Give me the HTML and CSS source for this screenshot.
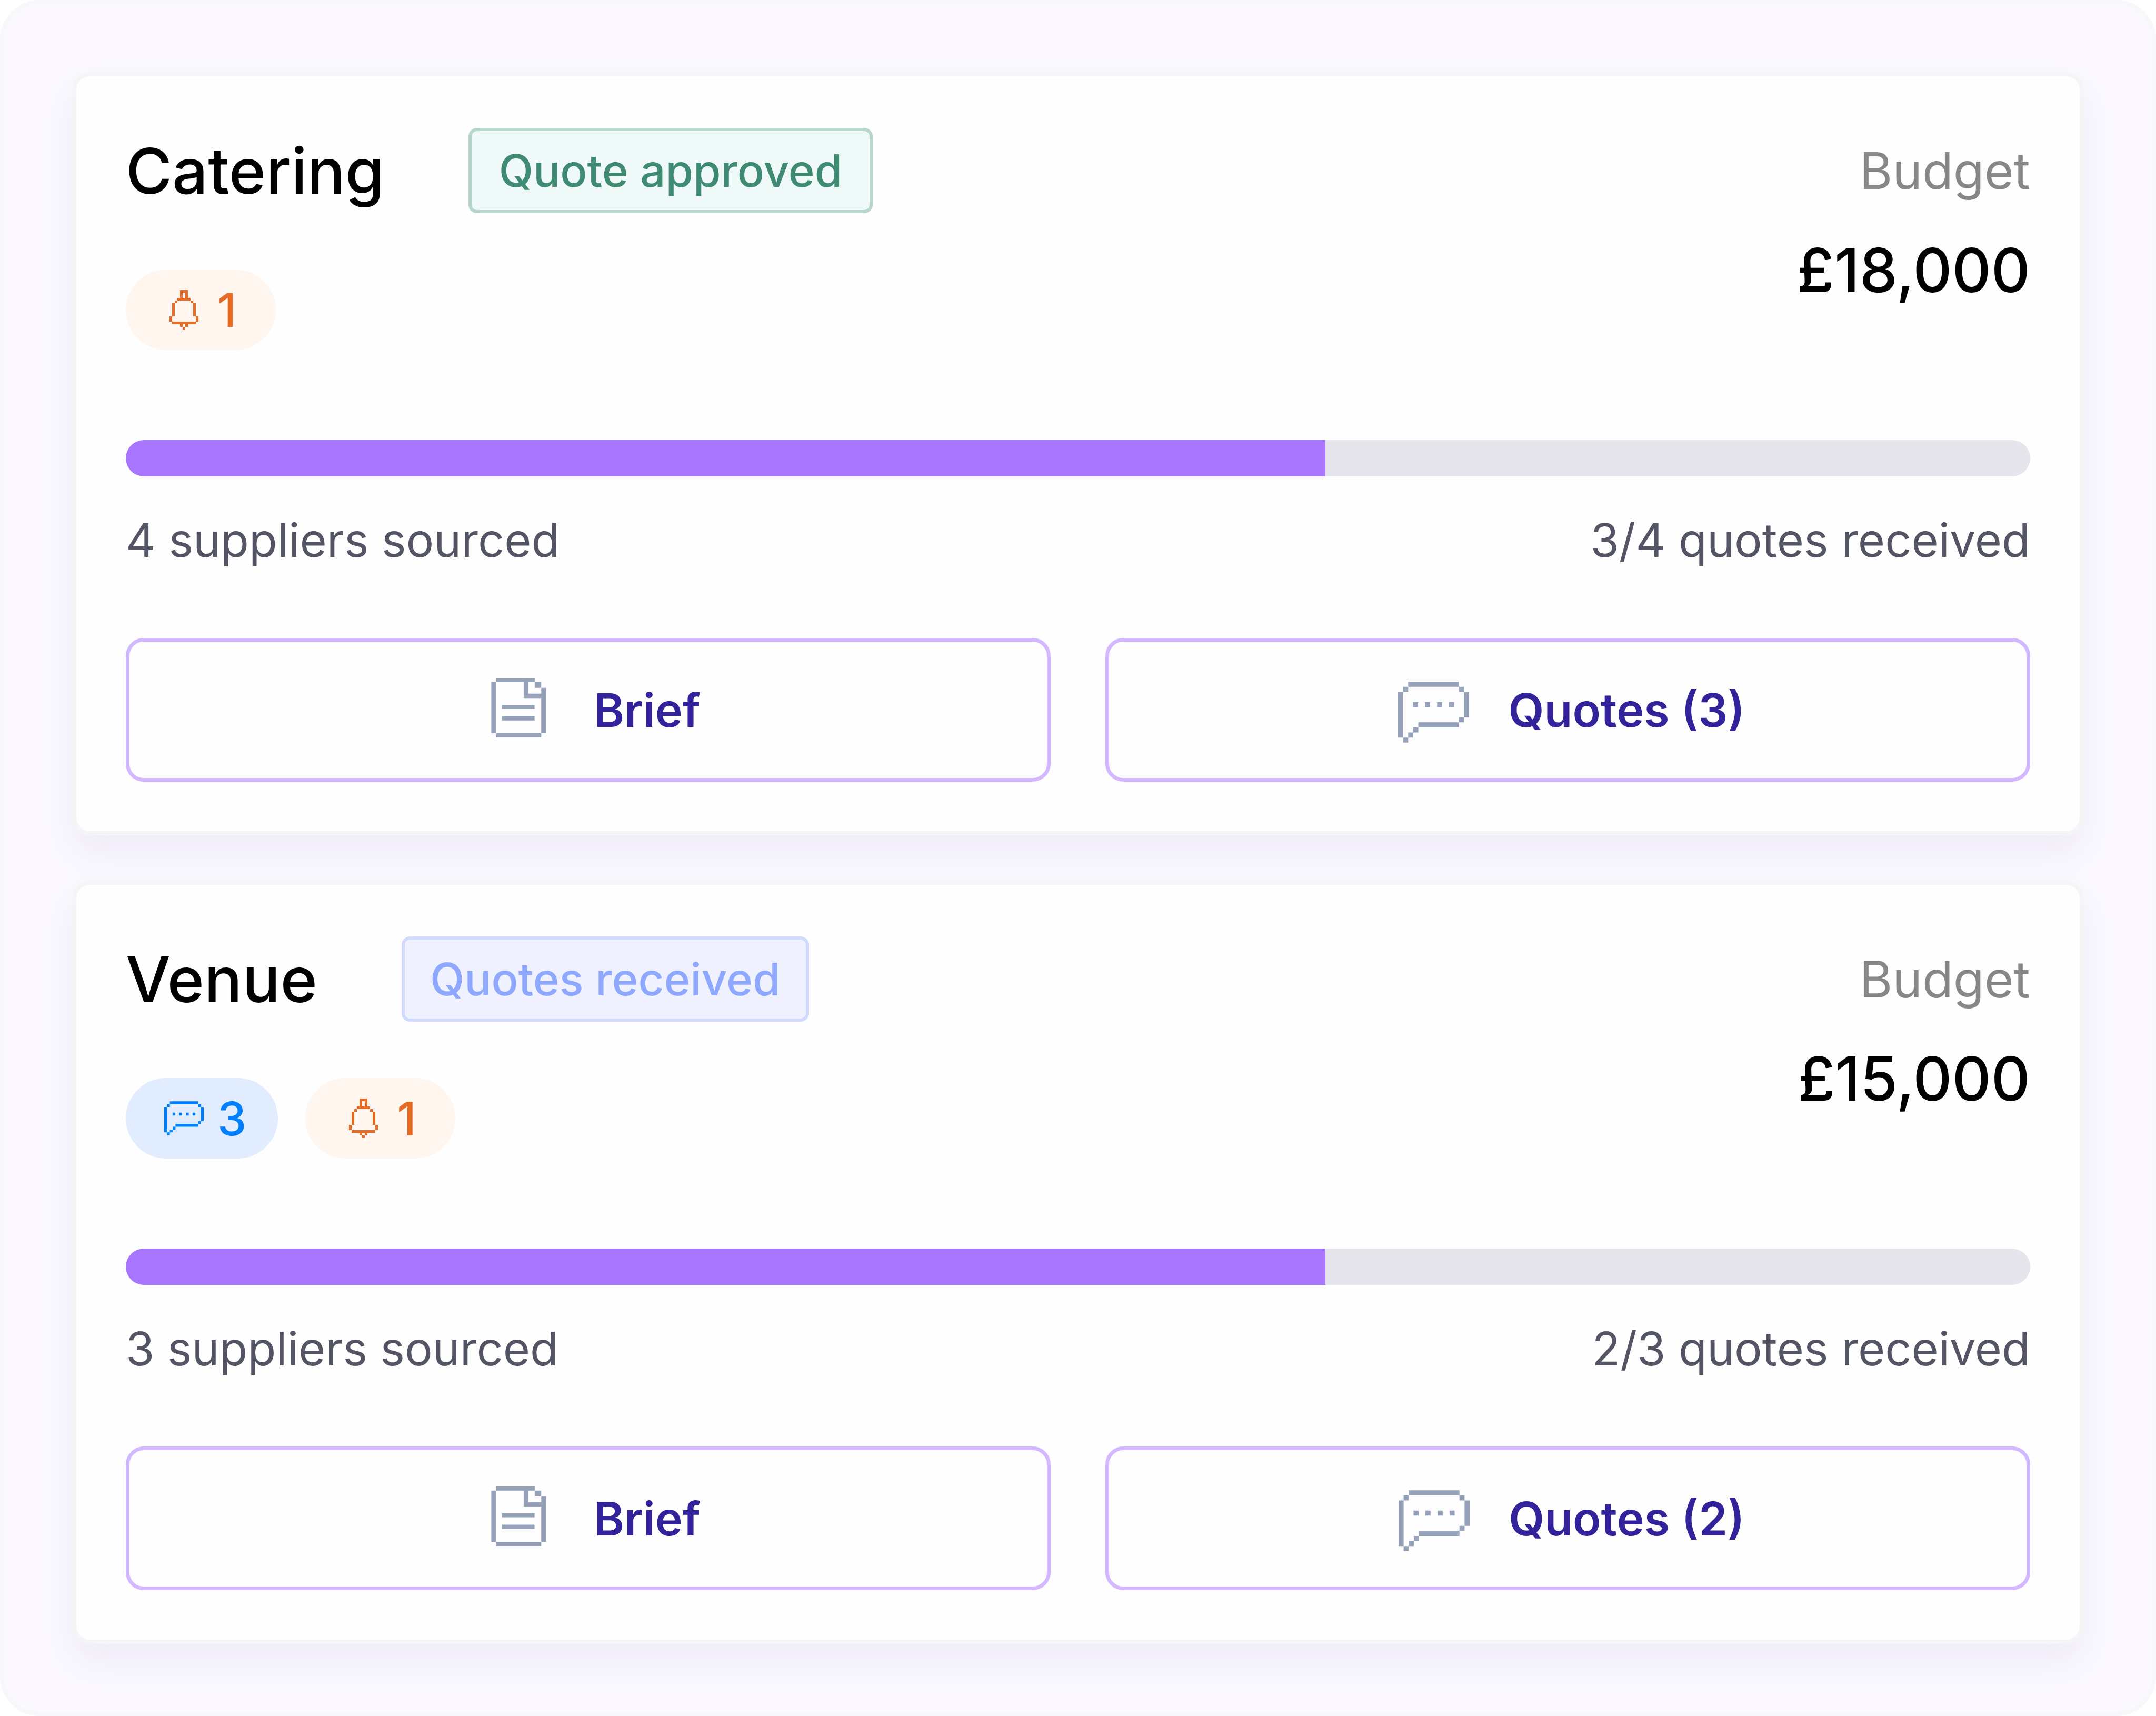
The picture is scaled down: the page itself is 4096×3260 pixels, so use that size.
FILE: index.html
```html
<!DOCTYPE html>
<html lang="en">
<head>
    <meta charset="UTF-8">
    <meta name="viewport" content="width=device-width, initial-scale=1.0">
    <title>Event Suppliers</title>
    <link rel="stylesheet" href="styles.css">
</head>
<body>

    <!-- Shared icons -->
    <svg class="icon-defs" aria-hidden="true">
        <symbol id="bell" viewBox="0 0 15 15">
            <path d="M6 0h3v1H6z M6 1h1v2H6z M8 1h1v2H8z M5 3h5v1H5z M4 4h1v1H4z M10 4h1v1h-1z M3 5h1v5H3z M11 5h1v5h-1z M2 10h1v2H2z M12 10h1v2h-1z M3 12h9v1H3z M6 13h1v1H6z M8 13h1v1H8z M7 14h1v1H7z"/>
        </symbol>
        <symbol id="chat" viewBox="0 0 14 12">
            <path d="M2 0h10v1H2z M1 1h1v1H1z M12 1h1v1h-1z M0 2h1v9H0z M13 2h1v5h-1z M12 7h1v1h-1z M4 8h8v1H4z M3 9h1v1H3z M2 10h1v1H2z M1 11h1v1H1z M2.95 4h1v1h-1z M5.3 4h1v1h-1z M7.7 4h1v1h-1z M10.05 4h1v1h-1z"/>
        </symbol>
        <symbol id="doc" viewBox="0 0 368 399">
            <path d="M32 0h259v27H32z M0 27h32v344H0z M217 27h31v108h-31z M248 105h87v30h-87z M291 27h44v39h-44z M335 66h33v305h-33z M32 371h303v28H32z M71 180h219v27H71z M71 256h219v29H71z"/>
        </symbol>
    </svg>

    <main class="panel">

        <!-- Catering -->
        <section class="card">
            <div class="card-header">
                <div class="card-info">
                    <div class="title-row">
                        <h2 class="title">Catering</h2>
                        <span class="badge approved">Quote approved</span>
                    </div>
                    <div class="pills">
                        <span class="pill alerts"><svg class="pill-icon"><use href="#bell"/></svg>1</span>
                    </div>
                </div>
                <div class="budget">
                    <div class="budget-label">Budget</div>
                    <div class="budget-value">£18,000</div>
                </div>
            </div>

            <div class="progress" role="progressbar" aria-valuenow="63" aria-valuemin="0" aria-valuemax="100" aria-label="Quotes received">
                <div class="progress-fill" style="width: 63%"></div>
            </div>
            <div class="stats">
                <span>4 suppliers sourced</span>
                <span>3/4 quotes received</span>
            </div>

            <div class="buttons">
                <button class="button" type="button">
                    <span class="button-icon"><svg class="doc-icon"><use href="#doc"/></svg></span>Brief
                </button>
                <button class="button" type="button">
                    <span class="button-icon"><svg class="chat-icon"><use href="#chat"/></svg></span>Quotes (3)
                </button>
            </div>
        </section>

        <!-- Venue -->
        <section class="card">
            <div class="card-header">
                <div class="card-info">
                    <div class="title-row">
                        <h2 class="title">Venue</h2>
                        <span class="badge received">Quotes received</span>
                    </div>
                    <div class="pills">
                        <span class="pill messages"><svg class="pill-icon"><use href="#chat"/></svg>3</span>
                        <span class="pill alerts"><svg class="pill-icon"><use href="#bell"/></svg>1</span>
                    </div>
                </div>
                <div class="budget">
                    <div class="budget-label">Budget</div>
                    <div class="budget-value">£15,000</div>
                </div>
            </div>

            <div class="progress" role="progressbar" aria-valuenow="63" aria-valuemin="0" aria-valuemax="100" aria-label="Quotes received">
                <div class="progress-fill" style="width: 63%"></div>
            </div>
            <div class="stats">
                <span>3 suppliers sourced</span>
                <span>2/3 quotes received</span>
            </div>

            <div class="buttons">
                <button class="button" type="button">
                    <span class="button-icon"><svg class="doc-icon"><use href="#doc"/></svg></span>Brief
                </button>
                <button class="button" type="button">
                    <span class="button-icon"><svg class="chat-icon"><use href="#chat"/></svg></span>Quotes (2)
                </button>
            </div>
        </section>

    </main>

</body>
</html>
```
FILE: styles.css
```css
* {
    box-sizing: border-box;
}

body {
    margin: 0;
    background: white;
    color: black;
    font-family: Inter, "Liberation Sans", sans-serif;
}

.icon-defs {
    display: none;
}

/* Outer panel */
.panel {
    display: flex;
    flex-direction: column;
    gap: 86px;
    min-height: 100vh;
    padding: 129px;
    background: #fbf9ff;
    border: 8px solid #f8f7f9;
    border-radius: 76px;
}

.card {
    padding: 98px 94px 94px;
    background: #fefefe;
    border: 8px solid #f5f4f6;
    border-radius: 34px;
    box-shadow: 0 34px 68px rgba(70, 40, 160, 0.07);
}

/* Title, pills and budget */
.card-header {
    display: flex;
    justify-content: space-between;
}

.title-row {
    display: flex;
    align-items: center;
    gap: 160px;
    height: 162px;
}

.title {
    margin: 0;
    font-size: 120px;
    font-weight: 500;
}

.badge {
    display: flex;
    align-items: center;
    justify-content: center;
    min-width: 768px;
    height: 162px;
    padding: 0 48px;
    border: 6px solid;
    border-radius: 16px;
    font-size: 85px;
    font-weight: 500;
}

.approved {
    background: #eff9f7;
    border-color: #b6d6ce;
    color: #3f8a72;
}

.received {
    background: #eff1ff;
    border-color: #d0daff;
    color: #8fa8ff;
}

.pills {
    display: flex;
    gap: 52px;
    margin-top: 107px;
}

.pill {
    display: flex;
    align-items: center;
    gap: 26px;
    min-width: 285px;
    height: 153px;
    padding: 0 60px 0 73px;
    border-radius: 77px;
    font-size: 88px;
    font-weight: 500;
}

.pill-icon {
    width: 75px;
    height: 75px;
    fill: currentColor;
}

.alerts {
    background: #fff6ef;
    color: #e66b24;
}

.messages {
    background: #e1edff;
    color: #0080ff;
}

.budget {
    display: flex;
    flex-direction: column;
    gap: 28px;
    text-align: right;
    line-height: 162px;
}

.budget-label {
    color: #888688;
    font-size: 96px;
}

.budget-value {
    font-size: 115px;
    font-weight: 500;
}

/* Progress */
.progress {
    height: 69px;
    margin-top: 171px;
    overflow: hidden;
    background: #e6e5eb;
    border-radius: 35px;
}

.progress-fill {
    height: 100%;
    background: #a875ff;
}

.stats {
    display: flex;
    justify-content: space-between;
    margin-top: 68px;
    color: #545564;
    font-size: 88px;
    line-height: 106px;
}

/* Buttons */
.buttons {
    display: grid;
    grid-template-columns: 1fr 1fr;
    gap: 104px;
    margin-top: 133px;
}

.button {
    display: flex;
    align-items: center;
    justify-content: center;
    gap: 60px;
    height: 273px;
    padding: 0;
    background: #fefefe;
    border: 7px solid #d1b8ff;
    border-radius: 34px;
    color: #33239b;
    font-family: inherit;
    font-size: 88px;
    font-weight: 600;
    cursor: pointer;
}

.button:hover {
    background: #faf8ff;
}

.button-icon {
    display: flex;
    justify-content: center;
    width: 164px;
    fill: #94a1b8;
}

.doc-icon {
    width: 105px;
    height: 113px;
    margin-bottom: 8px;
}

.chat-icon {
    width: 135px;
    height: 116px;
    margin-top: 8px;
}
```
